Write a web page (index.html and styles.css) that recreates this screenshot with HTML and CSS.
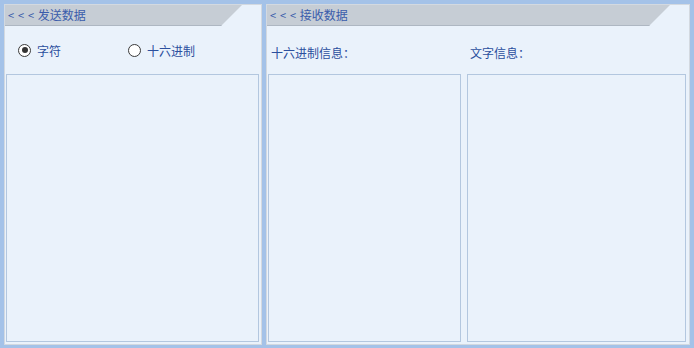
FILE: index.html
```html
<!DOCTYPE html>
<html lang="zh">
<head>
<meta charset="utf-8">
<link rel="stylesheet" href="styles.css">
</head>
<body>
<div class="app">
  <section class="panel panel-send">
    <div class="panel-head"><span class="arrows">&lt; &lt; &lt;</span>发送数据</div>
    <div class="radio-row">
      <label class="radio"><span class="dot checked"></span>字符</label>
      <label class="radio"><span class="dot"></span>十六进制</label>
    </div>
    <div class="box send-box"></div>
  </section>
  <section class="panel panel-recv">
    <div class="panel-head"><span class="arrows">&lt; &lt; &lt;</span>接收数据</div>
    <div class="recv-grid">
      <div class="col">
        <div class="col-label">十六进制信息：</div>
        <div class="box"></div>
      </div>
      <div class="col">
        <div class="col-label">文字信息：</div>
        <div class="box"></div>
      </div>
    </div>
  </section>
</div>
</body>
</html>
```

FILE: styles.css
```css
html, body {
  margin: 0;
  padding: 0;
}
body {
  background: #a4c2e8;
  font-family: "Noto Sans CJK SC", "Noto Sans", sans-serif;
  font-size: 12px;
  color: #2b4f9e;
}
.app {
  display: flex;
  gap: 4px;
  padding: 4px;
  height: 348px;
  box-sizing: border-box;
}
.panel {
  background: #eaf2fb;
  border: 1px solid #d3d9e0;
  box-sizing: border-box;
  height: 341px;
  display: flex;
  flex-direction: column;
}
.panel-send {
  width: 258px;
}
.panel-recv {
  flex: 1;
}
.panel-head {
  height: 21px;
  box-sizing: border-box;
  background: #c6cdd5;
  border-bottom: 1px solid #aeb7c2;
  clip-path: polygon(0 0, calc(100% - 19px) 0, calc(100% - 40px) 100%, 0 100%);
  line-height: 20px;
  padding-left: 3px;
  color: #3a5cab;
  white-space: nowrap;
  display: flex;
  align-items: center;
}
.arrows {
  font-size: 11px;
  letter-spacing: 0.7px;
  margin-right: 3px;
}
.radio-row {
  display: flex;
  height: 48px;
  align-items: center;
  padding-left: 13px;
  box-sizing: border-box;
}
.radio {
  display: flex;
  align-items: center;
  gap: 6px;
  width: 110px;
}
.dot {
  width: 11px;
  height: 11px;
  border: 1px solid #3a3a3a;
  border-radius: 50%;
  background: #fff;
  display: flex;
  align-items: center;
  justify-content: center;
}
.dot.checked::after {
  content: "";
  width: 6px;
  height: 6px;
  border-radius: 50%;
  background: #333;
}
.box {
  border: 1px solid #b3c7df;
  background: #eaf2fb;
  box-sizing: border-box;
}
.send-box {
  flex: 1;
  margin: 0 2px 2px 1px;
}
.recv-grid {
  flex: 1;
  display: grid;
  grid-template-columns: 193px 1fr;
  gap: 6px;
  padding: 0 3px 2px 1px;
}
.col {
  display: flex;
  flex-direction: column;
}
.col-label {
  height: 48px;
  line-height: 54px;
  padding-left: 3px;
  box-sizing: border-box;
}
.col .box {
  flex: 1;
}
```
